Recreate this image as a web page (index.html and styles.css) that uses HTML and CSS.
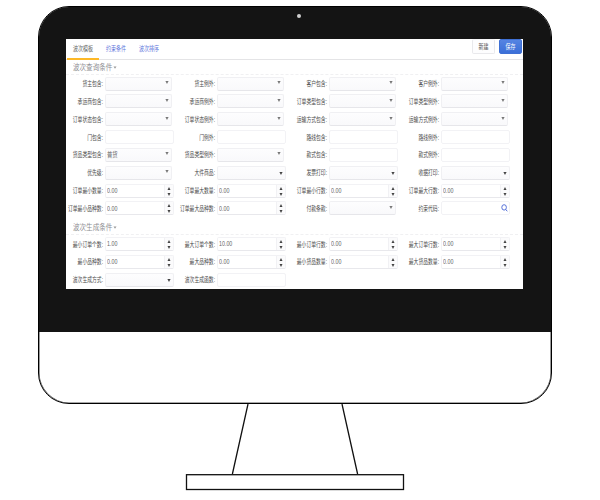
FILE: index.html
```html
<!DOCTYPE html>
<html lang="zh-CN">
<head>
<meta charset="utf-8">
<title>波次模板</title>
<link rel="stylesheet" href="styles.css">
</head>
<body>
<div class="monitor">
<div class="bezel">
<div class="camera"></div>
<main class="screen">
<header class="bar">
<nav class="tabs"><a class="tab active"><span>波次模板</span></a><a class="tab"><span>约束条件</span></a><a class="tab"><span>波次排序</span></a></nav>
<div class="actions"><button class="btn"><span>新建</span></button><button class="btn primary"><span>保存</span></button></div>
</header>
<h2 class="title"><span>波次查询条件</span><i class="tri"></i></h2>
<section class="grid">
<div class="cell"><label>货主包含:</label><div class="field select"></div></div>
<div class="cell"><label>货主例外:</label><div class="field select"></div></div>
<div class="cell"><label>客户包含:</label><div class="field select"></div></div>
<div class="cell"><label>客户例外:</label><div class="field select"></div></div>
<div class="cell"><label>承运商包含:</label><div class="field select"></div></div>
<div class="cell"><label>承运商例外:</label><div class="field select"></div></div>
<div class="cell"><label>订单类型包含:</label><div class="field select"></div></div>
<div class="cell"><label>订单类型例外:</label><div class="field select"></div></div>
<div class="cell"><label>订单状态包含:</label><div class="field select"></div></div>
<div class="cell"><label>订单状态例外:</label><div class="field select"></div></div>
<div class="cell"><label>运输方式包含:</label><div class="field select"></div></div>
<div class="cell"><label>运输方式例外:</label><div class="field select"></div></div>
<div class="cell"><label>门包含:</label><div class="field"></div></div>
<div class="cell"><label>门例外:</label><div class="field"></div></div>
<div class="cell"><label>路线包含:</label><div class="field"></div></div>
<div class="cell"><label>路线例外:</label><div class="field"></div></div>
<div class="cell"><label>货品类型包含:</label><div class="field select"><span>普货</span></div></div>
<div class="cell"><label>货品类型例外:</label><div class="field select"></div></div>
<div class="cell"><label>款式包含:</label><div class="field"></div></div>
<div class="cell"><label>款式例外:</label><div class="field"></div></div>
<div class="cell"><label>优先级:</label><div class="field select"></div></div>
<div class="cell"><label>大件商品:</label><div class="field drop"></div></div>
<div class="cell"><label>发票打印:</label><div class="field drop"></div></div>
<div class="cell"><label>收据打印:</label><div class="field drop"></div></div>
<div class="cell"><label>订单最小数量:</label><div class="field spin"><span>0.00</span><b></b></div></div>
<div class="cell"><label>订单最大数量:</label><div class="field spin"><span>0.00</span><b></b></div></div>
<div class="cell"><label>订单最小行数:</label><div class="field spin"><span>0.00</span><b></b></div></div>
<div class="cell"><label>订单最大行数:</label><div class="field spin"><span>0.00</span><b></b></div></div>
<div class="cell"><label>订单最小品种数:</label><div class="field spin"><span>0.00</span><b></b></div></div>
<div class="cell"><label>订单最大品种数:</label><div class="field spin"><span>0.00</span><b></b></div></div>
<div class="cell"><label>付款条款:</label><div class="field select"></div></div>
<div class="cell"><label>约束代码:</label><div class="field search"><svg viewBox="0 0 7 8"><ellipse cx="3.1" cy="3.4" rx="2.3" ry="2.7"/><path d="M4.7 5.4 6.3 7.3"/></svg></div></div>
</section>
<h2 class="title second"><span>波次生成条件</span><i class="tri"></i></h2>
<section class="grid">
<div class="cell"><label>最小订单个数:</label><div class="field spin"><span>1.00</span><b></b></div></div>
<div class="cell"><label>最大订单个数:</label><div class="field spin"><span>10.00</span><b></b></div></div>
<div class="cell"><label>最小订单行数:</label><div class="field spin"><span>0.00</span><b></b></div></div>
<div class="cell"><label>最大订单行数:</label><div class="field spin"><span>0.00</span><b></b></div></div>
<div class="cell"><label>最小品种数:</label><div class="field spin"><span>0.00</span><b></b></div></div>
<div class="cell"><label>最大品种数:</label><div class="field spin"><span>0.00</span><b></b></div></div>
<div class="cell"><label>最小货品数量:</label><div class="field spin"><span>0.00</span><b></b></div></div>
<div class="cell"><label>最大货品数量:</label><div class="field spin"><span>0.00</span><b></b></div></div>
<div class="cell"><label>波次生成方式:</label><div class="field drop"></div></div>
<div class="cell"><label>波次生成函数:</label><div class="field"></div></div>
</section>
</main>
</div>
</div>
<svg class="stand" viewBox="0 0 220 87"><path d="M63 0 47.4 70M157 0 172.6 70"/><rect x="1.5" y="70.7" width="217" height="14.8"/></svg>
</body>
</html>
```
FILE: styles.css
```css
* { box-sizing: border-box; }
body {
  margin: 0;
  width: 600px;
  height: 500px;
  overflow: hidden;
  background: #fff;
  font: 6.5px/1 "Liberation Sans", "Noto Sans CJK SC", sans-serif;
  color: #555;
}
.monitor {
  width: 514px;
  height: 398px;
  margin: 6px 0 0 38px;
  border: 1px solid #000;
  border-radius: 31px;
  box-shadow: inset 0 0 0 .6px #555;
  overflow: hidden;
}
.bezel {
  height: 325px;
  padding: 7px 27px 0;
  background: #141414;
}
.camera {
  width: 4px;
  height: 4px;
  margin-left: 231px;
  border-radius: 50%;
  background: #d0d0d0;
}
.screen {
  width: 457px;
  height: 250px;
  margin-top: 21px;
  background: #fff;
  overflow: hidden;
}
.bar {
  display: flex;
  justify-content: space-between;
  height: 21px;
  border-bottom: 1px solid #e4e4e6;
}
.tabs { display: flex; padding-left: 1px; }
.tab {
  display: flex;
  align-items: center;
  justify-content: center;
  width: 33px;
  height: 21px;
  padding-top: 0;
  color: #5f78dc;
}
.tab span, .btn span { transform: scaleX(.77); white-space: nowrap; }
.tab.active { width: 32px; color: #666; border-bottom: 2px solid #fdb827; padding: 2px 0 0; }
.actions { display: flex; gap: 4px; padding-right: 1px; }
.btn {
  display: flex;
  align-items: center;
  justify-content: center;
  width: 23px;
  height: 15px;
  padding: 1px 0 0;
  border: 1px solid #e9e9ec;
  border-top-color: #f6f6f8;
  border-radius: 2px;
  background: #fdfdfe;
  color: #555;
  font: inherit;
}
.btn.primary { background: linear-gradient(#5584e2, #3b6fd8); border-color: #3f70d4; color: #fff; }
.title {
  display: flex;
  align-items: center;
  height: 14.6px;
  margin: 0;
  padding: 2px 0 0 7px;
  border-bottom: 1px dashed #f0f0f2;
  font-size: 8px;
  font-weight: 400;
  color: #8e8e92;
}
.title span { width: 40px; transform: scaleX(.82); transform-origin: left; white-space: nowrap; }
.title.second { height: 17.8px; padding-top: 4px; }
.tri { margin-left: 0; border: 2px solid transparent; border-top: 3px solid #999; border-bottom: 0; transform: scale(.75); }
.grid {
  display: grid;
  grid-template-columns: repeat(4, 112px);
  grid-auto-rows: 17.85px;
}
.cell { display: flex; align-items: center; gap: 2px; }
label {
  display: flex;
  justify-content: flex-end;
  width: 37px;
  padding-top: 1.6px;
  white-space: nowrap;
  color: #4c4c4c;
  transform: scaleX(.74);
  transform-origin: right;
}
.field {
  display: flex;
  align-items: center;
  justify-content: space-between;
  width: 68.5px;
  height: 14px;
  padding-left: 1px;
  border: 1px solid #f2f2f5;
  border-radius: 2px;
  background: #fff;
}
.field span { transform: scaleX(.82); transform-origin: left; white-space: nowrap; color: #666; padding-top: 1px; }
.select { width: 67px; }
.select, .drop { background: linear-gradient(#fdfdfe, #f9f9fb); border-color: #f0f0f3; border-bottom-color: #e6e6ea; }
.select::after, .drop::after {
  content: "";
  margin: 0 2px 2px auto;
  border: 2px solid transparent;
  border-top: 3px solid #777;
  border-bottom: 0;
  transform: scaleX(.8);
}
.drop::after { margin: 1px 2px 0 auto; border-top-color: #444; }
.spin { border-bottom-color: #e8e8ec; }
.spin b {
  display: flex;
  flex-direction: column;
  align-items: center;
  justify-content: space-between;
  width: 9px;
  height: 12px;
  padding: 2px 0 1px;
  border-left: 1px solid #f1f1f4;
  background: #fbfbfc;
}
.spin b::before, .spin b::after { content: ""; border: 2px solid transparent; transform: scaleX(.75); }
.spin b::before { border-bottom: 3px solid #444; border-top: 0; }
.spin b::after { border-top: 3px solid #444; border-bottom: 0; }
.search svg { width: 7px; height: 8px; margin: 0 1px 0 auto; fill: none; stroke: #5570d8; stroke-width: 1; }
.stand { display: block; width: 220px; height: 87px; margin: 0 0 0 185px; fill: none; stroke: #111; stroke-width: 1.3; }
```
